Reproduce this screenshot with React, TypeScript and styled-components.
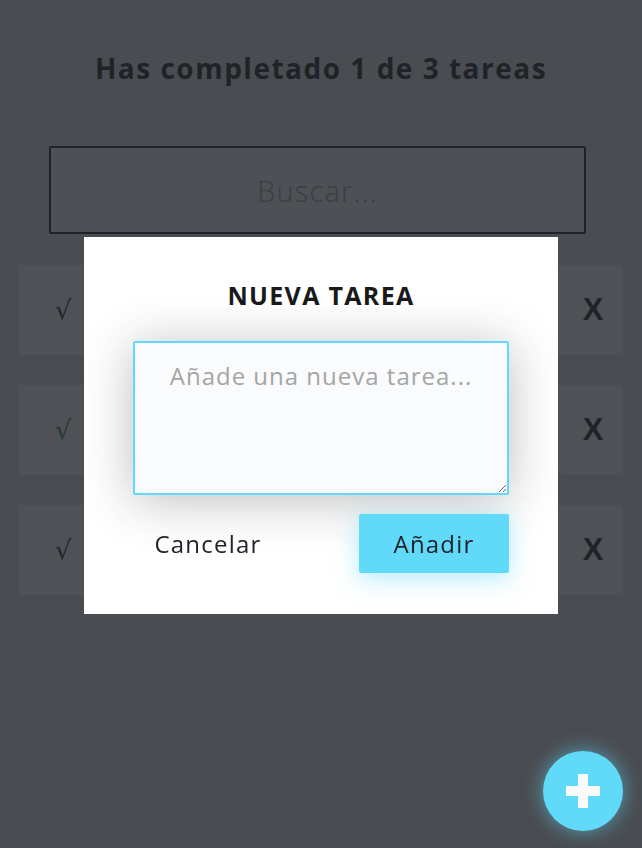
import React from 'react'
import styled, { createGlobalStyle } from 'styled-components'

const GlobalStyle = createGlobalStyle`
    * {
        box-sizing: border-box;
    }

    body {
        margin: 0;
        background: #e2e3e5;
        font-family: "Open Sans", "Liberation Sans", sans-serif;
        color: #202329;
    }
`

// the task texts sit behind the modal, so only the controls show
const todos = [
    { id: 1, completed: false },
    { id: 2, completed: true },
    { id: 3, completed: false },
]

const App = () => {
    const completed = todos.filter(todo => todo.completed).length

    return <Page>
        <GlobalStyle />
        <Title>Has completado {completed} de {todos.length} tareas</Title>
        <Search placeholder = 'Buscar...' />
        <List>
            {
                todos.map(todo => <Item key = { todo.id }>
                    <Check $done = { todo.completed }>√</Check>
                    <Delete>X</Delete>
                </Item>)
            }
        </List>

        <Overlay>
            <Form>
                <Label>NUEVA TAREA</Label>
                <TextArea placeholder = 'Añade una nueva tarea...' />
                <Buttons>
                    <Button type = 'button'>Cancelar</Button>
                    <Button type = 'submit' $primary>Añadir</Button>
                </Buttons>
            </Form>
        </Overlay>

        <Fab type = 'button' aria-label = 'Nueva tarea'>
            <svg width = '34' height = '34' viewBox = '0 0 34 34'>
                <rect x = '12' y = '0' width = '10' height = '34' fill = '#fafafa' />
                <rect x = '0' y = '12' width = '34' height = '10' fill = '#fafafa' />
            </svg>
        </Fab>
    </Page>
}

const Page = styled.main`
    min-height: 848px;
    padding-top: 46px;
    display: flex;
    flex-direction: column;
    align-items: center;
`

const Title = styled.h1`
    margin: 0 0 56px;
    font-size: 28px;
    font-weight: 700;
    line-height: 44px;
    letter-spacing: 1.5px;
    color: #202329;
`

const Search = styled.input`
    width: 537px;
    height: 88px;
    margin: 0 7px 31px 0;
    border: 2px solid #202329;
    border-radius: 2px;
    background: #f3f4f6;
    font-family: inherit;
    font-size: 29px;
    font-weight: 300;
    letter-spacing: 1.2px;
    text-align: center;
    color: #202329;

    &::placeholder {
        color: #9fa1a6;
    }
`

const List = styled.ul`
    width: 604px;
    margin: 0;
    padding: 0;
    list-style: none;
    display: flex;
    flex-direction: column;
    gap: 30px;
`

const Item = styled.li`
    height: 90px;
    display: flex;
    align-items: center;
    justify-content: space-between;
    padding: 0 15px 0 36px;
    background: #fbfbfc;
`

const Check = styled.span<{ $done: boolean }>`
    font-family: "DejaVu Serif", serif;
    font-size: 26px;
    color: ${props => props.$done ? '#3f8a4c' : '#30333a'};
`

const Delete = styled.span`
    width: 30px;
    font-family: "Liberation Sans", sans-serif;
    font-size: 31px;
    font-weight: 700;
    text-align: center;
    color: #202329;
`

const Overlay = styled.div`
    position: fixed;
    inset: 0;
    padding-top: 3px;
    display: flex;
    align-items: center;
    justify-content: center;
    background: rgba(32, 35, 41, 0.79);
`

const Form = styled.form`
    width: 474px;
    height: 377px;
    padding: 40px 49px;
    display: flex;
    flex-direction: column;
    align-items: center;
    background: #ffffff;
`

const Label = styled.label`
    margin-bottom: 28px;
    font-size: 25px;
    font-weight: 700;
    line-height: 36px;
    letter-spacing: 1.3px;
    color: #1a1a1a;
`

const TextArea = styled.textarea`
    width: 376px;
    height: 154px;
    padding: 16px 12px;
    border: 2px solid #61dafa;
    border-radius: 2px;
    background: #f9fbfc;
    box-shadow: 0 5px 50px rgba(32, 35, 41, 0.3);
    font-family: inherit;
    font-size: 24px;
    letter-spacing: 1px;
    text-align: center;
    color: #202329;
    outline: none;

    &::placeholder {
        color: #a5a5a5;
    }
`

const Buttons = styled.div`
    width: 376px;
    margin-top: 19px;
    display: flex;
    justify-content: space-between;
`

const Button = styled.button<{ $primary?: boolean }>`
    width: 150px;
    height: 59px;
    border: none;
    border-radius: 2px;
    background: ${props => props.$primary ? '#61dafa' : 'transparent'};
    box-shadow: ${props => props.$primary ? '0 5px 25px rgba(97, 218, 250, 0.5)' : 'none'};
    font-family: inherit;
    font-size: 24px;
    letter-spacing: 1.2px;
    color: #202329;
    cursor: pointer;
`

const Fab = styled.button`
    position: fixed;
    right: 19px;
    bottom: 17px;
    width: 80px;
    height: 80px;
    border: none;
    border-radius: 50%;
    display: flex;
    align-items: center;
    justify-content: center;
    background: #61dafa;
    box-shadow: 0 0 20px rgba(97, 218, 250, 0.6);
    cursor: pointer;
`

export default App
